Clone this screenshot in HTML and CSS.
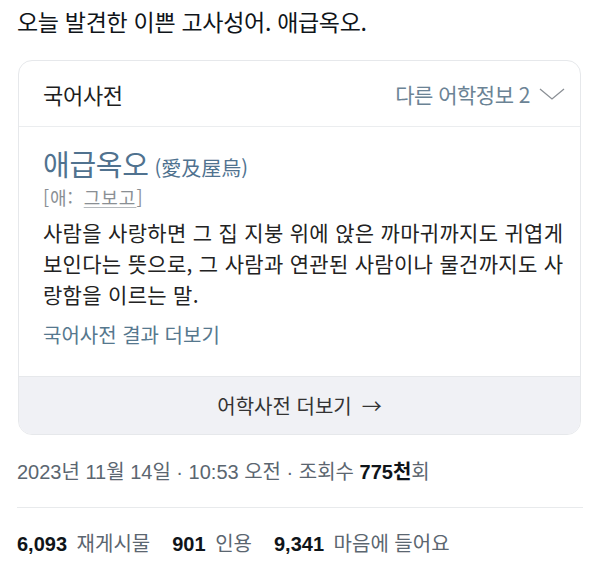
FILE: index.html
```html
<!DOCTYPE html>
<html lang="ko">
<head>
    <meta charset="UTF-8">
    <meta name="viewport" content="width=device-width, initial-scale=1.0">
    <title>애급옥오</title>
    <link rel="stylesheet" href="styles.css">
</head>
<body>
    <div class="post">
        <p class="post-text">오늘 발견한 이쁜 고사성어. 애급옥오.</p>

        <div class="dict-card">
            <div class="dict-head">
                <span class="dict-name">국어사전</span>
                <span class="dict-more">다른 어학정보 2
                    <svg width="28" height="14" viewBox="0 0 28 14"><path d="M2 2 L14 12 L26 2" fill="none" stroke="#8b9096" stroke-width="1.3"/></svg>
                </span>
            </div>
            <div class="dict-body">
                <div class="entry">
                    <span class="entry-word">애급옥오</span>
                    <span class="entry-hanja">(愛及屋烏)</span>
                </div>
                <div class="entry-pron">[애: <u>그보고</u>]</div>
                <div class="entry-def">사람을 사랑하면 그 집 지붕 위에 앉은 까마귀까지도 귀엽게<br>보인다는 뜻으로, 그 사람과 연관된 사람이나 물건까지도 사<br>랑함을 이르는 말.</div>
                <div class="entry-link">국어사전 결과 더보기</div>
            </div>
            <div class="dict-foot">어학사전 더보기 <span class="arrow">&rarr;</span></div>
        </div>

        <div class="meta">2023년 11월 14일 · 10:53 오전 · 조회수 <b>775천</b>회</div>

        <div class="stats">
            <span><b>6,093</b> 재게시물</span>
            <span><b>901</b> 인용</span>
            <span><b>9,341</b> 마음에 들어요</span>
        </div>
    </div>
</body>
</html>
```

FILE: styles.css
```css
body {
    margin: 0;
    background-color: #fff;
    font-family: "Noto Sans CJK KR", "Noto Sans", sans-serif;
    color: #0f1419;
}
.post {
    padding: 0 17px;
}
.post-text {
    margin: 0;
    padding-top: 6px;
    font-size: 23px;
    line-height: 30px;
    letter-spacing: -0.3px;
}
.dict-card {
    margin: 24px 2px 0 1px;
    border: 1px solid #e6e8eb;
    border-radius: 14px;
    overflow: hidden;
    background-color: #fff;
}
.dict-head {
    display: flex;
    justify-content: space-between;
    align-items: center;
    height: 65px;
    padding: 0 14px 0 24px;
    border-bottom: 1px solid #ebedef;
}
.dict-name {
    font-size: 22px;
    letter-spacing: -0.3px;
    color: #1e1e1e;
}
.dict-more {
    display: flex;
    align-items: center;
    gap: 8px;
    font-size: 21px;
    letter-spacing: -0.5px;
    color: #6b8395;
}
.dict-body {
    padding: 19px 24px 27px;
}
.entry {
    display: flex;
    align-items: baseline;
    gap: 6px;
    color: #50728f;
}
.entry-word {
    font-size: 29px;
    line-height: 34px;
    letter-spacing: -0.3px;
}
.entry-hanja {
    font-size: 20px;
}
.entry-pron {
    margin-top: 3px;
    font-size: 18px;
    line-height: 24px;
    letter-spacing: 1px;
    word-spacing: 4px;
    color: #8a8f94;
}
.entry-pron u {
    text-decoration-color: #b5b9bd;
    text-underline-offset: 2px;
}
.entry-def {
    margin-top: 8px;
    font-size: 21px;
    line-height: 31px;
    letter-spacing: 0.3px;
    white-space: nowrap;
    color: #222;
}
.entry-link {
    margin-top: 11px;
    font-size: 20px;
    line-height: 28px;
    color: #56788e;
}
.dict-foot {
    height: 57px;
    display: flex;
    justify-content: center;
    align-items: center;
    background-color: #f0f1f5;
    border-top: 1px solid #e6e8eb;
    font-size: 20px;
    color: #333;
}
.dict-foot .arrow {
    margin-left: 10px;
    font-size: 20px;
}
.meta {
    margin-top: 23px;
    padding-bottom: 21px;
    border-bottom: 1px solid #e8eaec;
    font-family: "Liberation Sans", "Noto Sans CJK KR", sans-serif;
    font-size: 20px;
    line-height: 28px;
    color: #5b6670;
}
.meta b {
    color: #0f1419;
}
.stats {
    display: flex;
    gap: 22px;
    padding-top: 22px;
    font-family: "Liberation Sans", "Noto Sans CJK KR", sans-serif;
    font-size: 20px;
    line-height: 28px;
    color: #5b6670;
}
.stats b {
    color: #0f1419;
    margin-right: 4px;
}
```
